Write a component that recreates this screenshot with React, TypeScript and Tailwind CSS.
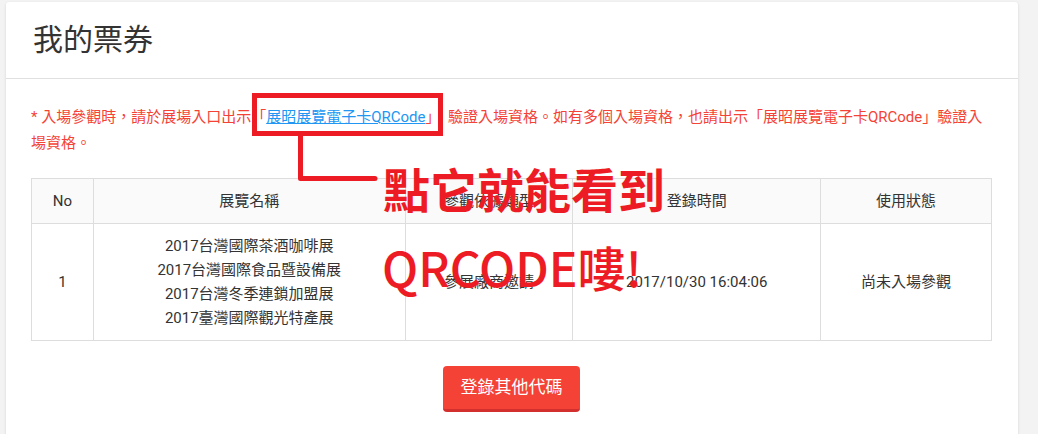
import React from 'react';

const font = { fontFamily: 'Roboto, "Noto Sans CJK TC", sans-serif' };

const exhibitions = [
  '2017台灣國際茶酒咖啡展',
  '2017台灣國際食品暨設備展',
  '2017台灣冬季連鎖加盟展',
  '2017臺灣國際觀光特產展',
];

export default function App() {
  return (
    <div className="h-[434px] overflow-hidden bg-[#f3f3f3] pl-[6px] pr-[20px] pt-[2px]" style={font}>
      <div className="relative h-[500px] rounded-t-[3px] bg-white shadow-[0_1px_3px_rgba(0,0,0,0.12)]">
        <div className="flex h-[77px] items-center border-b border-[#e0e0e0] pl-[27px]">
          <h1 className="text-[30px] font-normal leading-none text-[#333]">我的票券</h1>
        </div>

        <div className="px-[25px] pt-[25px]">
          <p className="w-[962px] text-[15px] leading-[26px] text-[#f44336]">
            * 入場參觀時，請於展場入口出示「
            <a href="#" className="text-[#2196f3] underline">展昭展覽電子卡QRCode</a>
            」，驗證入場資格。如有多個入場資格，也請出示「展昭展覽電子卡QRCode」驗證入場資格。
          </p>

          <table className="mt-[22px] w-[961px] border-collapse text-center text-[15px] text-[#333]">
            <thead>
              <tr className="h-[45px] bg-[#fafafa]">
                <th className="w-[62px] border border-[#ddd] font-normal">No</th>
                <th className="w-[312px] border border-[#ddd] font-normal">展覽名稱</th>
                <th className="w-[168px] border border-[#ddd] font-normal">參觀依據類型</th>
                <th className="w-[248px] border border-[#ddd] font-normal">登錄時間</th>
                <th className="w-[171px] border border-[#ddd] font-normal">使用狀態</th>
              </tr>
            </thead>
            <tbody>
              <tr className="h-[117px]">
                <td className="border border-[#ddd]">1</td>
                <td className="border border-[#ddd] leading-[24px]">
                  {exhibitions.map((e) => (
                    <div key={e}>{e}</div>
                  ))}
                </td>
                <td className="border border-[#ddd]">參展廠商邀請</td>
                <td className="border border-[#ddd]">2017/10/30 16:04:06</td>
                <td className="border border-[#ddd]">尚未入場參觀</td>
              </tr>
            </tbody>
          </table>

          <div className="mt-[25px] flex w-[961px] justify-center">
            <button className="h-[46px] w-[137px] rounded-[4px] border-b-[3px] border-[#d32f2f] bg-[#f44336] text-[17px] text-white">
              登錄其他代碼
            </button>
          </div>
        </div>

        {/* annotation overlay */}
        <div className="absolute left-[246px] top-[91px] h-[43px] w-[191px] border-[5px] border-[#ed1c24]" />
        <svg className="absolute left-0 top-0" width="1000" height="300" style={{ pointerEvents: 'none' }}>
          <path d="M294.5 132 V176.5 H369" fill="none" stroke="#ed1c24" strokeWidth="5" strokeLinecap="round" strokeLinejoin="round" />
        </svg>
        <div
          className="absolute left-[377px] top-[162px] text-[47px] font-bold leading-none text-[#ed1c24]"
          style={{ fontFamily: '"Noto Sans CJK TC", sans-serif' }}
        >
          點它就能看到
        </div>
        <div
          className="absolute left-[376px] top-[240px] text-[48px] font-medium leading-none text-[#ed1c24]"
          style={{ fontFamily: '"Noto Sans CJK TC", sans-serif' }}
        >
          QRCODE嘍!
        </div>
      </div>
    </div>
  );
}
